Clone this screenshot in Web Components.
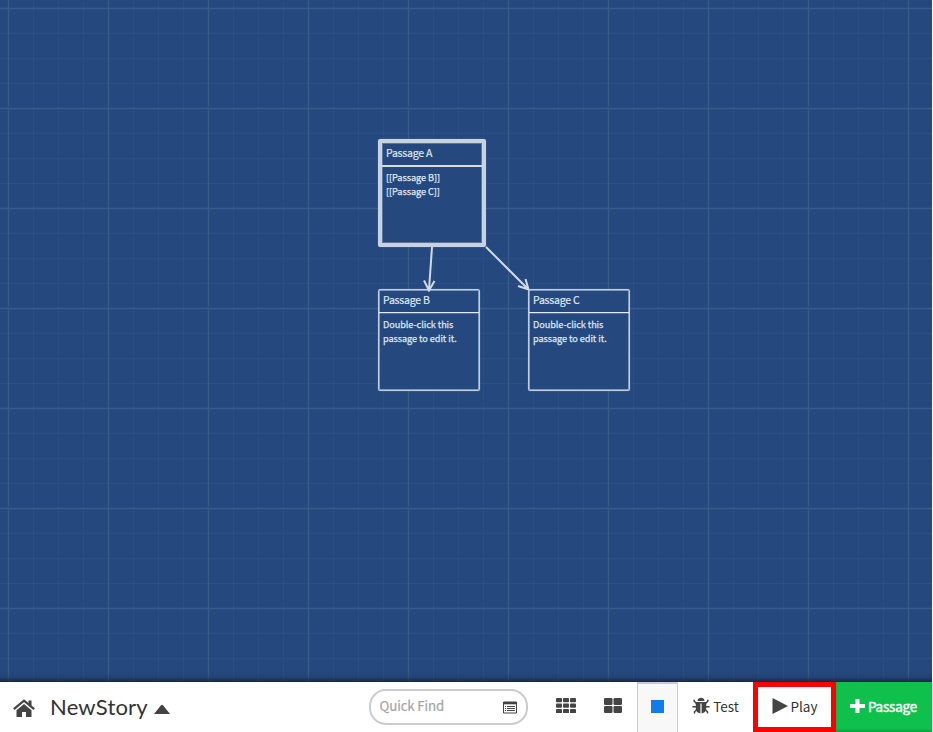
<!DOCTYPE html>
<html lang="en"><head><meta charset="utf-8"><title>NewStory</title>
<style>html,body{margin:0;background:#fff}body{width:933px;height:732px;overflow:hidden;font-family:"Noto Sans CJK SC","Noto Sans",sans-serif;color:#333}</style></head><body>
<story-app></story-app>
<script>
const define=(name,html,setup)=>customElements.define(name,class extends HTMLElement{
 connectedCallback(){if(this.shadowRoot)return;const r=this.attachShadow({mode:'open'});r.innerHTML=html;if(setup)setup(this,r)}
});
define('story-passage',`<style>
:host{position:absolute;box-sizing:border-box;width:102px;height:102px;border:1px solid rgba(220,228,238,.85);border-radius:2.5px;color:#dfe6f0;background:#25497f;display:flex;flex-direction:column;box-shadow:inset 0 0 0 1px rgba(214,223,235,.55),0 0 1px rgba(255,255,255,.5)}
:host([start]){width:108px;height:108px;border:4px solid #c9d2e1;box-shadow:inset 0 0 0 1px rgba(214,223,235,.3),0 0 1px rgba(255,255,255,.5)}
h2{margin:0;height:23px;flex:none;box-sizing:border-box;padding:0 4px;border-bottom:1px solid #e3e9f1;box-shadow:0 1px rgba(227,233,241,.25);font-size:10.5px;line-height:19px;font-weight:400;letter-spacing:-.22px;white-space:nowrap;-webkit-text-stroke:.2px}
:host([start]) h2{height:24px;line-height:20px;border-bottom:2px solid #d3dbe7;box-shadow:none}
h2 slot{display:block}
p{margin:0;padding:4px 0 0 4px;font-size:9.15px;line-height:14px;letter-spacing:-.05px;white-space:nowrap;-webkit-text-stroke:.25px}
:host([start]) p{padding-top:3px}
</style><h2><slot name="title"></slot></h2><p><slot></slot></p>`);
define('story-map',`<style>
:host{position:relative;display:block;width:932px;height:682px;overflow:hidden;background:#25497f}
svg{position:absolute;inset:0}.links{z-index:2}
.shade{position:absolute;left:0;right:0;bottom:0;height:10px;background:linear-gradient(transparent,rgba(20,31,55,.2) 55%,rgba(20,31,55,.8))}
</style><svg width="932" height="682"><defs>
<pattern id="minor" width="25" height="25" patternUnits="userSpaceOnUse" x="8" y="8"><path d="M.5 0V25M0 .5H25" stroke="#2b4f84"/></pattern>
<pattern id="major" width="100" height="100" patternUnits="userSpaceOnUse" x="7" y="7"><path d="M1.5 0V100M0 1.5H100" stroke="#385a89" stroke-width="1.3"/></pattern></defs>
<rect width="932" height="682" fill="url(#minor)"/><rect width="932" height="682" fill="url(#major)"/></svg>
<slot></slot><svg class="links" width="932" height="682" fill="none" stroke="#d0d9e6" stroke-width="2"><path d="M432 247L429 290M424 280.5L429 290.5L434.5 281M486 247L528 289M518 286L528.5 289.5L525.5 279"/></svg><div class="shade"></div>`);
define('tool-button',`<style>
:host{display:flex;align-items:center;justify-content:center;box-sizing:border-box;height:50px;flex:none;font-size:13.5px;white-space:nowrap;color:#333}
:host([selected]){background:#f8f8f8;border:solid #ccc;border-width:2px 1px 0}
:host([outlined]){border:5px solid #f00}
:host([primary]){background:#0fc04d;color:#fff;box-shadow:inset 0 -2px 2px rgba(0,80,20,.25)}
span{display:block;line-height:20px;margin-top:-3px;letter-spacing:-.05px}:host([primary]) span{-webkit-text-stroke:.4px;letter-spacing:-.2px}
svg{display:block;flex:none}
</style><slot name="icon"></slot><span><slot></slot></span>`);
define('quick-find',`<style>
:host{display:flex;align-items:center;justify-content:space-between;box-sizing:border-box;width:159px;height:36px;border:2px solid #ccc;border-radius:17px;padding:0 8px 0 8.5px;background:#fff;color:#a5a5a5;font-size:13.3px}
span{line-height:20px;margin-top:-3px;letter-spacing:-.15px;-webkit-text-stroke:.2px}svg{margin-top:1px}
</style><span>Quick Find</span><svg width="16" height="13" viewBox="0 0 16 13"><path d="M1.5 1H14.5V12H1.5Z" fill="none" stroke="#444"/><path d="M1 1H15V3.3H1Z" fill="#444"/><path d="M3 5.5H4M3 7.5H4M3 9.5H4M5 5.5H13M5 7.5H13M5 9.5H13" stroke="#444"/></svg>`);
define('story-name',`<style>
:host{display:flex;align-items:center;height:50px;font-family:Lato,sans-serif;font-size:22px;line-height:50px;color:#333;white-space:nowrap}
span{letter-spacing:.2px;height:50px}svg{margin:4px 0 0 6px}
</style><span><slot></slot></span><svg width="16" height="10"><path d="M0 10L7 1.3Q8 0 9 1.3L16 10Z" fill="#444"/></svg>`);
define('story-toolbar',`<style>
:host{display:flex;width:932px;height:50px;background:#fff;align-items:center}
.home{margin:2px 0 0 13px;width:22px;flex:none}story-name{margin:0 0 0 15px;width:319px;flex:none}
quick-find{margin-right:15px;flex:none;margin-top:0}svg{display:block;flex:none}.icon{margin-top:-4px}
</style>
<svg class="home" width="22" height="19" viewBox="0 0 22 19"><path d="M15.5 1.5H18.5V8.5L15.5 5.5Z" fill="#444"/><path d="M.8 10.2L11 1.7L21.2 10.2" fill="none" stroke="#444" stroke-width="2.2"/><path d="M3.5 11.2L11 5L18.5 11.2V18H13V13H9V18H3.5Z" fill="#444"/></svg>
<story-name>NewStory</story-name><quick-find></quick-find>
<tool-button style="width:46px"><svg class="icon" slot="icon" width="20" height="15" fill="#444"><g id="dots"></g></svg></tool-button>
<tool-button style="width:48px"><svg class="icon" slot="icon" width="18" height="15" fill="#444"><rect width="8.5" height="7" rx="1.3"/><rect x="9.5" width="8.5" height="7" rx="1.3"/><rect y="8" width="8.5" height="7" rx="1.3"/><rect x="9.5" y="8" width="8.5" height="7" rx="1.3"/></svg></tool-button>
<tool-button selected style="width:41px"><svg class="icon" slot="icon" width="13" height="13"><path fill="#127bed" d="M0 0H13V13H0Z"/></svg></tool-button>
<tool-button style="width:75px"><svg slot="icon" style="margin:-2px 3px 0 0" width="18" height="18" viewBox="0 0 18 18"><path d="M5.5 4Q6 .7 9 .7Q12 .7 12.5 4ZM3.8 5H14.2V12Q14 15.6 9.6 16.4V6.5H8.4V16.4Q4 15.6 3.8 12Z" fill="#444"/><path d="M4.5 6.5L2.2 4.2V2.7M13.5 6.5L15.8 4.2V2.7M4.5 9.8H.4M13.5 9.8H17.6M5 12.5L2.5 14.8V16.5M13 12.5L15.5 14.8V16.5" fill="none" stroke="#444" stroke-width="1.5"/></svg>Test</tool-button>
<tool-button outlined style="width:83px"><svg slot="icon" style="margin:-2px 3px 0 0" width="16" height="16"><path d="M.5 0L16 8L.5 16Z" fill="#444"/></svg>Play</tool-button>
<tool-button primary style="width:96px"><svg slot="icon" style="margin:-3px 3px 0 -1px" width="15" height="16"><path d="M7.5 1V15M0 8H15" fill="none" stroke="#fff" stroke-width="4"/></svg>Passage</tool-button>`,(h,r)=>{
 let s='';for(let y=0;y<3;y++)for(let x=0;x<3;x++)s+=`<rect x="${x*7}" y="${y*5.5}" width="6" height="4.3" rx="1"/>`;r.getElementById('dots').innerHTML=s;
});
define('story-app',`<style>:host{display:flex;flex-direction:column;width:932px;height:732px}</style>
<story-map>
<story-passage start style="left:378px;top:139px"><span slot="title">Passage A</span>[[Passage B]]<br>[[Passage C]]</story-passage>
<story-passage style="left:378px;top:289px"><span slot="title">Passage B</span>Double-click this<br>passage to edit it.</story-passage>
<story-passage style="left:528px;top:289px"><span slot="title">Passage C</span>Double-click this<br>passage to edit it.</story-passage>
</story-map><story-toolbar></story-toolbar>`);
</script></body></html>
